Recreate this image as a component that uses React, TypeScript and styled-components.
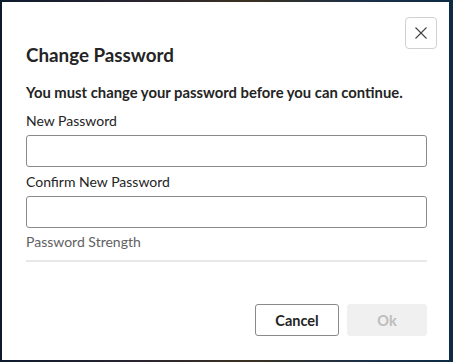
import React from "react";
import styled, { createGlobalStyle } from "styled-components";

const Global = createGlobalStyle`
  html, body { margin: 0; padding: 0; }
  body {
    width: 453px;
    height: 362px;
    overflow: hidden;
    background: linear-gradient(90deg, #0d1a2e 0%, #2a2430 30%, #3a3020 55%, #1a3048 80%, #0e2a44 100%);
    font-family: Lato, "Noto Sans", sans-serif;
  }
`;

const Backdrop = styled.div`
  width: 453px;
  height: 362px;
  padding: 2px 4px 2px 2px;
  box-sizing: border-box;
  display: flex;
`;

const Dialog = styled.div`
  flex: 1;
  background: #ffffff;
  box-sizing: border-box;
  padding: 15px 12px 24px 24px;
  display: flex;
  flex-direction: column;
  color: #242424;
`;

const Header = styled.div`
  display: flex;
  justify-content: flex-end;
`;

const CloseButton = styled.button`
  width: 32px;
  height: 32px;
  border: 1px solid #d1d1d1;
  border-radius: 4px;
  background: #fff;
  display: flex;
  align-items: center;
  justify-content: center;
  padding: 0;
  color: #424242;
`;

const Body = styled.div`
  display: flex;
  flex-direction: column;
  padding-right: 10px;
`;

const Title = styled.h2`
  margin: -7px 0 0 0;
  font-size: 18.8px;
  line-height: 26px;
  font-weight: 700;
`;

const Notice = styled.p`
  margin: 14px 0 0 0;
  font-size: 14.8px;
  line-height: 20px;
  font-weight: 700;
`;

const Label = styled.label<{ $top: number }>`
  margin: ${(p) => p.$top}px 0 0 0;
  font-size: 14px;
  line-height: 20px;
  font-weight: 400;
  display: block;
`;

const Input = styled.input`
  margin-top: 4px;
  height: 32px;
  box-sizing: border-box;
  border: 1px solid #8a8a8a;
  border-radius: 3px;
  padding: 0 10px;
  font: inherit;
  outline: none;
`;

const Strength = styled.div`
  margin-top: 5px;
  font-size: 14px;
  line-height: 18px;
  color: #616161;
`;

const Divider = styled.div`
  margin-top: 9px;
  height: 2px;
  background: #e8e8e8;
`;

const Footer = styled.div`
  margin-top: auto;
  display: flex;
  justify-content: flex-end;
  gap: 8px;
  padding-right: 10px;
`;

const Button = styled.button<{ $disabled?: boolean; $w: number }>`
  height: 32px;
  width: ${(p) => p.$w}px;
  padding: 0;
  box-sizing: border-box;
  border-radius: 3px;
  font-family: inherit;
  font-size: 14.5px;
  font-weight: 700;
  border: 1px solid ${(p) => (p.$disabled ? "#f0f0f0" : "#8a8a8a")};
  background: ${(p) => (p.$disabled ? "#f0f0f0" : "#ffffff")};
  color: ${(p) => (p.$disabled ? "#bdbdbd" : "#242424")};
`;

export default function App() {
  return (
    <>
      <Global />
      <Backdrop>
        <Dialog>
          <Header>
            <CloseButton aria-label="Close">
              <svg width="14" height="14" viewBox="0 0 14 14">
                <path d="M1.5 1.5L12.5 12.5M12.5 1.5L1.5 12.5" stroke="#424242" strokeWidth="1.1" fill="none" />
              </svg>
            </CloseButton>
          </Header>
          <Body>
            <Title>Change Password</Title>
            <Notice>You must change your password before you can continue.</Notice>
            <Label $top={9}>New Password</Label>
            <Input type="password" />
            <Label $top={5}>Confirm New Password</Label>
            <Input type="password" />
            <Strength>Password Strength</Strength>
            <Divider />
          </Body>
          <Footer>
            <Button $w={84}>Cancel</Button>
            <Button $w={80} $disabled disabled>Ok</Button>
          </Footer>
        </Dialog>
      </Backdrop>
    </>
  );
}
